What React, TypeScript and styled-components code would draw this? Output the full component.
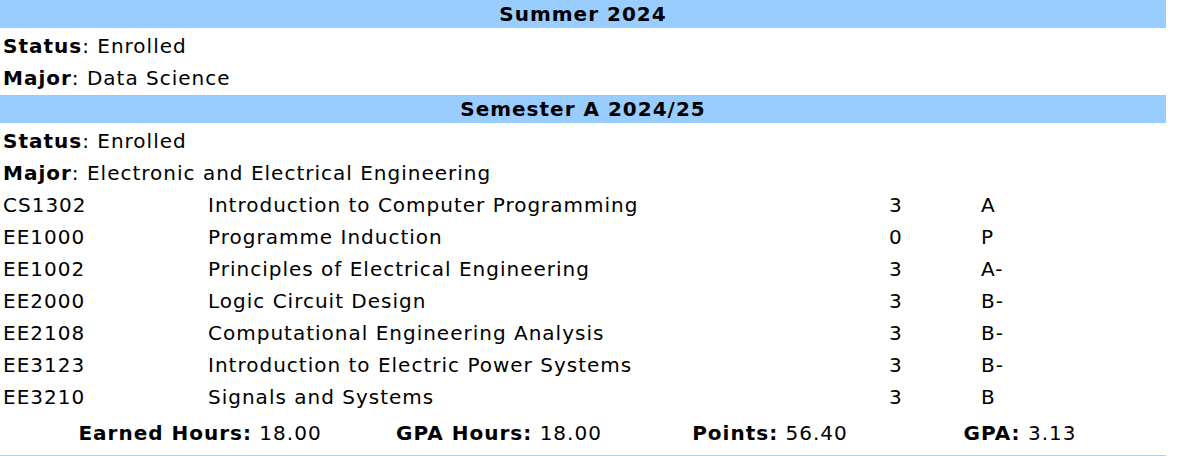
import React from 'react'
import styled, { createGlobalStyle } from 'styled-components'

const GlobalStyle = createGlobalStyle`
  body {
    margin: 0;
    background: #ffffff;
    font-family: "DejaVu Sans", Verdana, sans-serif;
    color: #000000;
  }
`

const Page = styled.div`
  width: 1166px;
  display: flex;
  flex-direction: column;
  font-size: 20px;
  letter-spacing: 1px;
`

const TermBar = styled.div<{ $first?: boolean }>`
  height: 28px;
  margin-top: ${props => (props.$first ? '0' : '1px')};
  margin-bottom: 2px;
  background: #99ccff;
  display: flex;
  align-items: center;
  justify-content: center;
  font-weight: bold;
`

const InfoRow = styled.div`
  height: 32px;
  display: flex;
  align-items: center;
  padding-left: 3px;
  white-space: pre;

  & b {
    font-weight: bold;
  }
`

const CourseRow = styled.div`
  height: 32px;
  display: grid;
  grid-template-columns: 205px 681px 92px 1fr;
  align-items: center;
  padding-left: 3px;
`

const TotalsRow = styled.div`
  height: 36px;
  margin-top: 2px;
  display: grid;
  grid-template-columns: 400px 198px 344px 156px;
  align-items: center;
  border-bottom: 2px solid #a3d3f0;
  padding-bottom: 4px;
`

const Total = styled.div`
  display: flex;
  justify-content: center;
  white-space: nowrap;

  & b {
    font-weight: bold;
  }
`

interface Course {
  code: string
  title: string
  credits: string
  grade: string
}

const courses: Course[] = [
  { code: 'CS1302', title: 'Introduction to Computer Programming', credits: '3', grade: 'A' },
  { code: 'EE1000', title: 'Programme Induction', credits: '0', grade: 'P' },
  { code: 'EE1002', title: 'Principles of Electrical Engineering', credits: '3', grade: 'A-' },
  { code: 'EE2000', title: 'Logic Circuit Design', credits: '3', grade: 'B-' },
  { code: 'EE2108', title: 'Computational Engineering Analysis', credits: '3', grade: 'B-' },
  { code: 'EE3123', title: 'Introduction to Electric Power Systems', credits: '3', grade: 'B-' },
  { code: 'EE3210', title: 'Signals and Systems', credits: '3', grade: 'B' },
]

const totals = [
  { label: 'Earned Hours:', value: '18.00' },
  { label: 'GPA Hours:', value: '18.00' },
  { label: 'Points:', value: '56.40' },
  { label: 'GPA:', value: '3.13' },
]

const App = () => {
  return (
    <>
      <GlobalStyle />
      <Page>
        <TermBar $first>Summer 2024</TermBar>
        <InfoRow><b>Status</b>: Enrolled</InfoRow>
        <InfoRow><b>Major</b>: Data Science</InfoRow>

        <TermBar>Semester A 2024/25</TermBar>
        <InfoRow><b>Status</b>: Enrolled</InfoRow>
        <InfoRow><b>Major</b>: Electronic and Electrical Engineering</InfoRow>
        {courses.map(c => (
          <CourseRow key={c.code}>
            <span>{c.code}</span>
            <span>{c.title}</span>
            <span>{c.credits}</span>
            <span>{c.grade}</span>
          </CourseRow>
        ))}
        <TotalsRow>
          {totals.map(t => (
            <Total key={t.label}>
              <span><b>{t.label}</b> {t.value}</span>
            </Total>
          ))}
        </TotalsRow>
      </Page>
    </>
  )
}

export default App
